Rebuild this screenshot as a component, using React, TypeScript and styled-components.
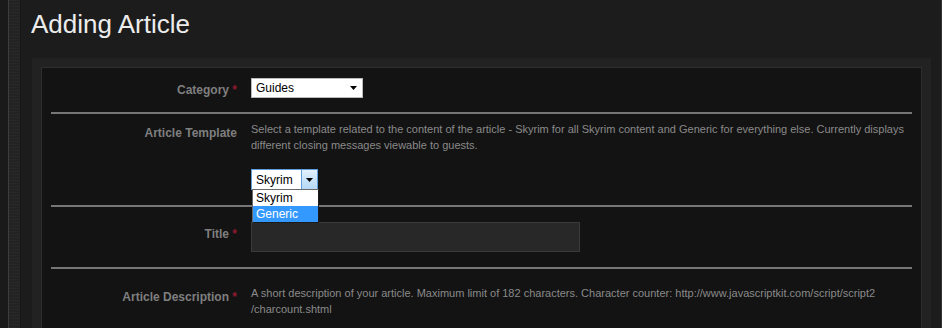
import React from "react";
import styled, { createGlobalStyle } from "styled-components";

const Global = createGlobalStyle`
  html, body { margin: 0; padding: 0; background: #1c1c1c; overflow: hidden; }
  body { font-family: "Liberation Sans", Arial, sans-serif; }
`;

const Page = styled.div`
  display: flex;
  width: 942px;
  height: 328px;
  overflow: hidden;
  background: #1c1c1c;
`;

const LeftRail = styled.div`
  flex: 0 0 21px;
  background:
    repeating-linear-gradient(to bottom, rgba(255,255,255,0.025) 0 1px, transparent 1px 3px) 9px 0 / 11px 100% no-repeat,
    linear-gradient(to right, #1a1a1a 0 8px, #3d3d3d 8px 9px, #232323 9px 20px, #171717 20px 21px);
`;

const RightRail = styled.div`
  flex: 0 0 2px;
  background: linear-gradient(to right, #1c1c1c 0 1px, #333333 1px 2px);
`;

const Main = styled.main`
  flex: 1;
  min-width: 0;
  padding: 9px 9px 0 10px;
`;

const Title = styled.h1`
  margin: 0;
  font-family: "Liberation Sans", Arial, sans-serif;
  font-weight: normal;
  font-size: 26px;
  line-height: 30px;
  color: #ececec;
`;

const Panel = styled.section`
  margin: 19px 0 0 1px;
  background: #222222;
  padding: 9px;
`;

const Inner = styled.div`
  background: #131313;
  border: 1px solid #2d2d2d;
  padding: 0 9px;
`;

const Row = styled.div<{ $top: number; $bottom: number; $last?: boolean }>`
  display: grid;
  grid-template-columns: 186px 1fr;
  column-gap: 14px;
  align-items: start;
  padding: ${(p) => p.$top}px 0 ${(p) => p.$bottom}px;
  border-bottom: ${(p) => (p.$last ? "none" : "2px solid #767676")};
`;

const Label = styled.div<{ $offset: number }>`
  margin-top: ${(p) => p.$offset}px;
  text-align: right;
  font-family: "Liberation Sans", Arial, sans-serif;
  font-weight: bold;
  font-size: 12px;
  line-height: 15px;
  color: #7f7f7f;
  white-space: nowrap;
`;

const Req = styled.span`
  color: #8e1b2e;
`;

const Field = styled.div`
  display: flex;
  flex-direction: column;
  align-items: flex-start;
  min-width: 0;
`;

const Desc = styled.p`
  margin: 0;
  font-family: "Liberation Sans", Arial, sans-serif;
  font-size: 11px;
  line-height: 16px;
  color: #8a8a8a;
`;

const SelectBox = styled.div<{ $width: number; $open?: boolean }>`
  position: relative;
  box-sizing: border-box;
  width: ${(p) => p.$width}px;
  height: ${(p) => (p.$open ? 21 : 20)}px;
  margin-top: ${(p) => (p.$open ? 16 : 0)}px;
  background: #ffffff;
  border: 1px solid ${(p) => (p.$open ? "#5d9fdc" : "#b9b9b9")};
  display: flex;
  align-items: center;
  font-family: "Liberation Sans", Arial, sans-serif;
  font-size: 12px;
  color: #000;
`;

const SelectValue = styled.span`
  flex: 1;
  padding-left: 4px;
  line-height: 18px;
`;

const PlainArrow = styled.span`
  display: flex;
  align-items: center;
  justify-content: center;
  width: 14px;
  height: 100%;
  margin-right: 2px;
`;

const ArrowButton = styled.span`
  box-sizing: border-box;
  display: flex;
  align-items: center;
  justify-content: center;
  width: 16px;
  height: 100%;
  border-left: 1px solid #5d9fdc;
  background: linear-gradient(to bottom, #e4f1fc 0%, #c9e3f8 50%, #b6d8f5 100%);
`;

const OptionList = styled.ul`
  position: absolute;
  top: 19px;
  left: 0px;
  box-sizing: border-box;
  width: 67px;
  margin: 0;
  padding: 0;
  list-style: none;
  background: #fff;
  border: 1px solid #1b1b1b;
  border-left-color: #6a6a6a;
  border-top-color: #6a6a6a;
  z-index: 2;
`;

const Option = styled.li<{ $active?: boolean }>`
  height: 16px;
  line-height: 16px;
  padding-left: 3px;
  font-size: 12px;
  background: ${(p) => (p.$active ? "#3399ff" : "#fff")};
  color: ${(p) => (p.$active ? "#fff" : "#000")};
`;

const TextInput = styled.div`
  box-sizing: border-box;
  width: 329px;
  height: 30px;
  background: #282828;
  border: 1px solid #3a3a3a;
`;

const Tri = () => (
  <svg width="7" height="4" viewBox="0 0 7 4">
    <polygon points="0,0 7,0 3.5,4" fill="#000" />
  </svg>
);

export default function App() {
  return (
    <>
      <Global />
      <Page>
        <LeftRail />
        <Main>
          <Title>Adding Article</Title>
          <Panel>
            <Inner>
              <Row $top={10} $bottom={14}>
                <Label $offset={5}>
                  Category <Req>*</Req>
                </Label>
                <Field>
                  <SelectBox $width={112}>
                    <SelectValue>Guides</SelectValue>
                    <PlainArrow>
                      <Tri />
                    </PlainArrow>
                  </SelectBox>
                </Field>
              </Row>
              <Row $top={7} $bottom={15}>
                <Label $offset={5}>Article Template</Label>
                <Field>
                  <Desc>
                    Select a template related to the content of the article - Skyrim for all Skyrim content and
                    Generic for everything else. Currently displays different closing messages viewable to guests.
                  </Desc>
                  <SelectBox $width={67} $open>
                    <SelectValue>Skyrim</SelectValue>
                    <ArrowButton>
                      <Tri />
                    </ArrowButton>
                    <OptionList>
                      <Option>Skyrim</Option>
                      <Option $active>Generic</Option>
                    </OptionList>
                  </SelectBox>
                </Field>
              </Row>
              <Row $top={15} $bottom={15}>
                <Label $offset={5}>
                  Title <Req>*</Req>
                </Label>
                <Field>
                  <TextInput />
                </Field>
              </Row>
              <Row $top={16} $bottom={20} $last>
                <Label $offset={5}>
                  Article Description <Req>*</Req>
                </Label>
                <Field>
                  <Desc>
                    A short description of your article. Maximum limit of 182 characters. Character counter:
                    http://www.javascriptkit.com/script/script2<wbr />/charcount.shtml
                  </Desc>
                </Field>
              </Row>
            </Inner>
          </Panel>
        </Main>
        <RightRail />
      </Page>
    </>
  );
}
